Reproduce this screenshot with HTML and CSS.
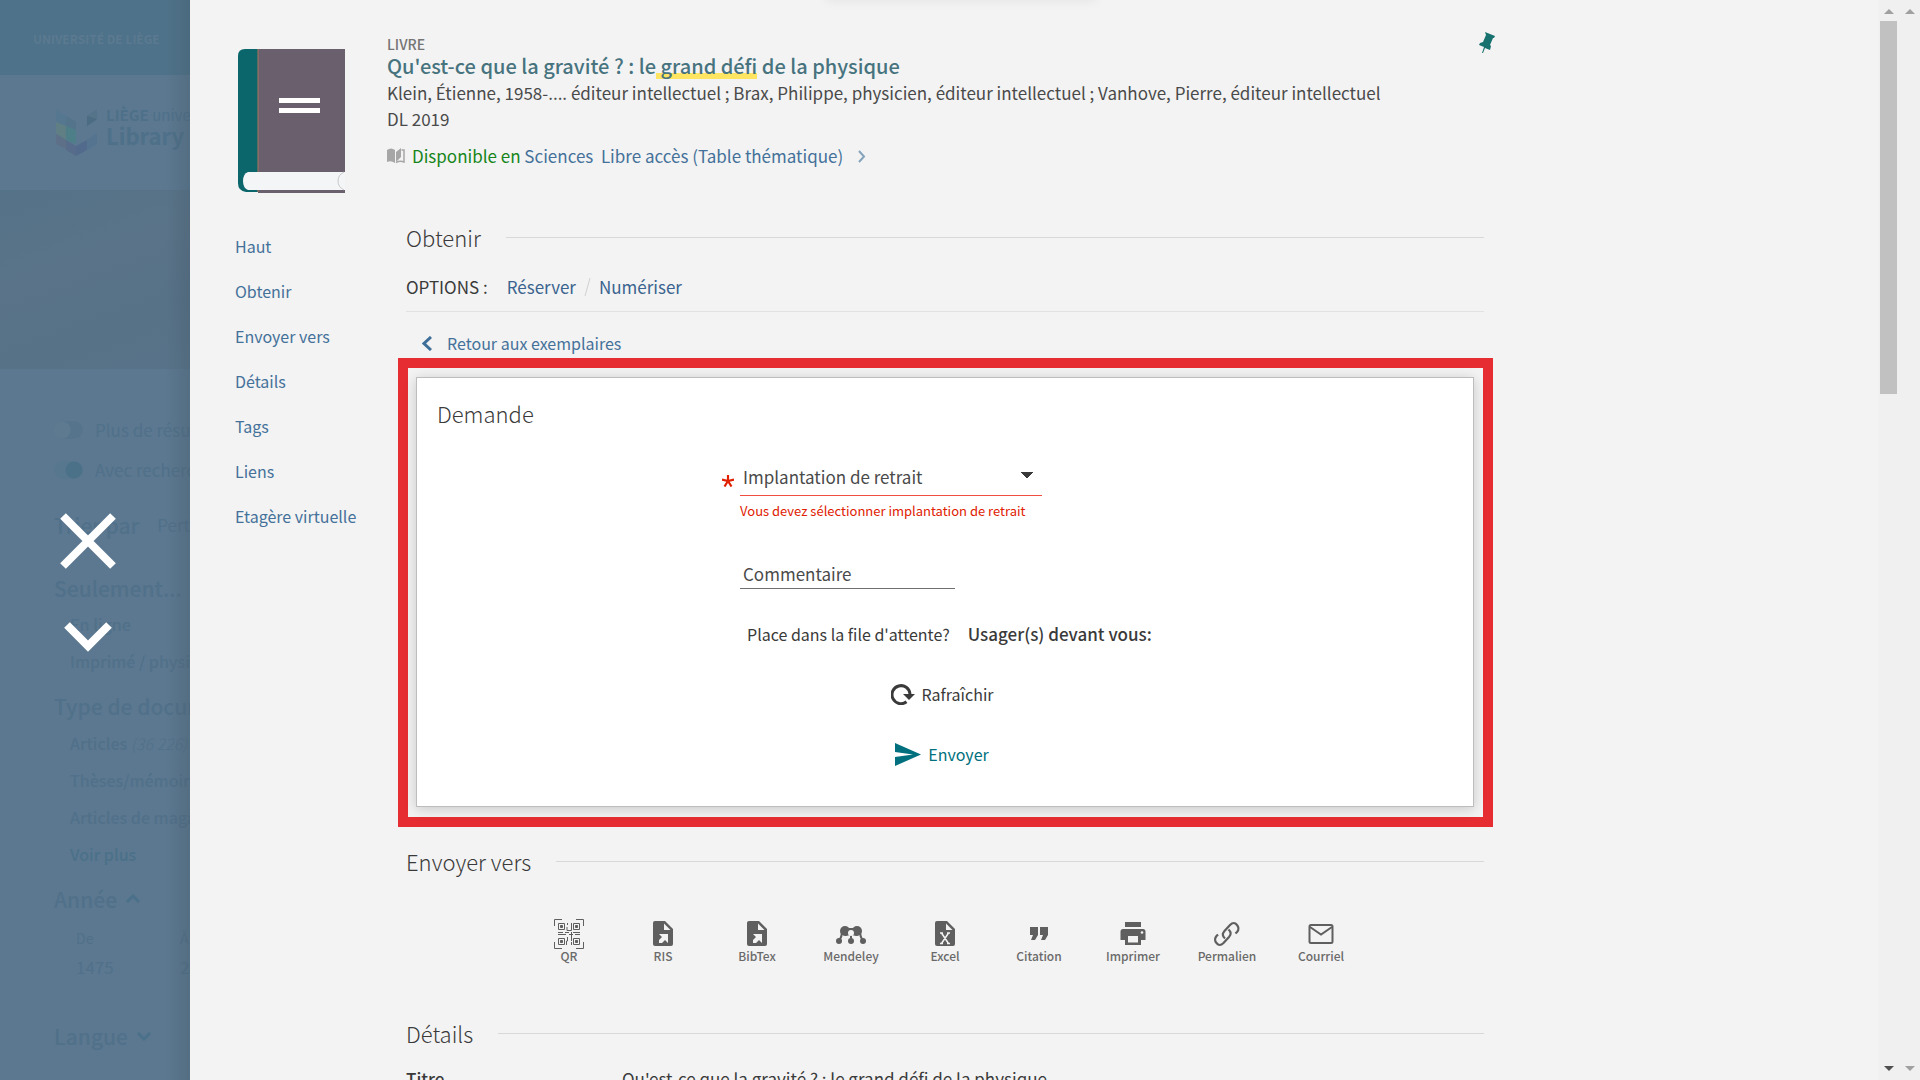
FILE: index.html
```html
<!DOCTYPE html>
<html lang="fr">
<head>
<meta charset="utf-8">
<title>Qu'est-ce que la gravité ? - ULiège Library</title>
<link rel="stylesheet" href="styles.css">
</head>
<body>
<div class="app">
  <aside class="backdrop">
    <div class="topbar">UNIVERSITÉ DE LIÈGE</div>
    <div class="brand">
      <svg class="brand-mark" viewBox="0 0 42 48" aria-hidden="true">
        <path d="M0 2l10 6v10L0 14z" fill="#567790"/><path d="M10 8l10 6v8l-10-4z" fill="#53748b"/>
        <path d="M0 14l10 4v14L0 26z" fill="#5f7f84"/><path d="M10 18l10 4v14l-10-4z" fill="#4e7f88"/>
        <path d="M0 26l10 6v9L0 36z" fill="#5d7088"/><path d="M10 32l10 6v10L10 42z" fill="#576c8b"/>
        <path d="M20 38l11-6v10l-11 6z" fill="#526b8d"/><path d="M31 32l10-7v11l-10 6z" fill="#557490"/>
        <path d="M31 8l10-7v10l-10 7z" fill="#557389"/><path d="M31 8l10 3-10 7z" fill="#4b6c82"/>
      </svg>
      <div class="brand-text"><span class="brand-top"><b>LIÈGE</b> université</span><b class="brand-name">Library</b></div>
    </div>
    <div class="banner"></div>
    <div class="filters">
      <label class="toggle"><input type="checkbox"><span>Plus de résultats</span></label>
      <label class="toggle"><input type="checkbox" checked><span>Avec recherche</span></label>
      <div class="sort"><b>Trier par</b><span>Pertinence</span></div>
      <h3 class="facet">Seulement...</h3>
      <a class="choice" href="#">En ligne</a>
      <a class="choice" href="#">Imprimé / physique</a>
      <h3 class="facet facet-tight">Type de document</h3>
      <a class="choice" href="#">Articles <i>(36 226)</i></a>
      <a class="choice" href="#">Thèses/mémoires</a>
      <a class="choice" href="#">Articles de magazine</a>
      <a class="choice more" href="#">Voir plus</a>
      <h3 class="facet facet-tight">Année <svg viewBox="0 0 16 10"><path d="M2 8l6-6 6 6"/></svg></h3>
      <div class="years">
        <label>De<input type="text" value="1475"></label>
        <label>À<input type="text" value="2024"></label>
      </div>
      <h3 class="facet facet-last">Langue <svg viewBox="0 0 16 10"><path d="M2 2l6 6 6-6"/></svg></h3>
    </div>
    <div class="overlay-controls">
      <button type="button" aria-label="Fermer"><svg width="56" height="56" viewBox="0 0 56 56"><path d="M3 3l50 50M53 3L3 53" stroke-width="8"/></svg></button>
      <button type="button" aria-label="Suivant"><svg width="48" height="30" viewBox="0 0 48 30"><path d="M3 3l21 21L45 3" stroke-width="8"/></svg></button>
    </div>
  </aside>

  <main class="panel">
    <header class="record">
      <svg class="cover" viewBox="0 0 107 144" aria-hidden="true">
        <path d="M20 0h87v144H20z" fill="#6a606d"/>
        <path d="M7 0h13v143H8q-8-1-8-9V7q0-7 7-7z" fill="#0a666b"/>
        <path d="M20 0v143" stroke="#a8745c" stroke-width="1"/>
        <path d="M41 49h41v5H41zM41 59h41v5H41z" fill="#fff"/>
        <path d="M10 123h97v18H10q-5-2-5-9t5-9z" fill="#f4f5f7"/>
        <path d="M106 123q-6 3-6 9t6 9" fill="none" stroke="#c8c9cb"/>
      </svg>
      <div class="record-text">
        <div class="kind">LIVRE</div>
        <h1 class="title"><a href="#">Qu'est-ce que la gravité ? : le<mark> grand défi</mark> de la physique</a></h1>
        <div class="meta">Klein, Étienne, 1958-.... éditeur intellectuel ; Brax, Philippe, physicien, éditeur intellectuel ; Vanhove, Pierre, éditeur intellectuel</div>
        <div class="meta">DL 2019</div>
        <div class="avail">
          <svg width="18" height="16" viewBox="0 0 18 16"><path d="M0 2q4-3 8 0v13q-4-3-8-1z" fill="#a6a6a6"/><path d="M9 4l5-4v9l-5 5z" fill="#a6a6a6"/><path d="M14.500 2H17v12q-4-1.500-8 .500" fill="none" stroke="#a6a6a6" stroke-width="1.500"/></svg>
          <a href="#"><em>Disponible en</em> Sciences&nbsp; Libre accès (Table thématique)</a>
          <svg width="9" height="13" viewBox="0 0 9 13" fill="none" stroke="#84a3bd" stroke-width="2"><path d="M2 1l5 5.500-5 5.500"/></svg>
        </div>
      </div>
      <button type="button" class="pin" aria-label="Épingler"><svg width="17" height="22" viewBox="0 0 17 22" fill="#17726f"><path d="M6 0l10 4-1 2h-1l-3 7 1 1-1 4-5-2-2 5H3l2-6-5-2 1-2 3-1 3-7z"/></svg></button>
    </header>

    <div class="body">
      <nav class="toc">
        <a href="#">Haut</a><a href="#">Obtenir</a><a href="#">Envoyer vers</a><a href="#">Détails</a><a href="#">Tags</a><a href="#">Liens</a><a href="#">Etagère virtuelle</a>
      </nav>
      <div class="sections">
        <section>
          <h2 class="head">Obtenir</h2>
          <div class="options"><span>OPTIONS :</span><a href="#">Réserver</a><svg width="7" height="18" viewBox="0 0 7 18"><path d="M6 0L1 18" stroke="#d0d0d0"/></svg><a href="#">Numériser</a></div>
          <a class="back" href="#"><svg width="10" height="15" viewBox="0 0 10 15" fill="none" stroke="#3f6f98" stroke-width="3"><path d="M9 1L2 7.500 9 14"/></svg>Retour aux exemplaires</a>
          <div class="frame">
            <div class="card">
              <h3 class="card-title">Demande</h3>
              <form class="request">
                <div class="pickup">
                  <svg class="star" width="12" height="12" viewBox="0 0 12 12" aria-hidden="true"><path d="M6 6V0M6 6L0 4.500M6 6l6-1.500M6 6l-3.500 5.500M6 6l3.500 5.500" stroke="#e02000" stroke-width="2.200"/></svg>
                  <select aria-label="Implantation de retrait"><option>Implantation de retrait</option></select>
                </div>
                <p class="error">Vous devez sélectionner implantation de retrait</p>
                <input class="comment" type="text" placeholder="Commentaire" aria-label="Commentaire">
                <div class="queue"><span>Place dans la file d'attente?</span><b>Usager(s) devant vous:</b></div>
                <button type="button" class="action"><svg width="24" height="22" viewBox="0 0 24 22"><path d="M15.500 18.800A9 9 0 1 1 19 11" fill="none" stroke="#3a3a3a" stroke-width="3"/><path d="M12 11h12l-6 6z" fill="#3a3a3a"/></svg>Rafraîchir</button>
                <button type="submit" class="action send"><svg width="26" height="23" viewBox="0 0 26 23"><path d="M0 0l26 11.500L0 23v-9l18-2.500L0 9z" fill="#00707e"/></svg>Envoyer</button>
              </form>
            </div>
          </div>
        </section>

        <section class="share">
          <h2 class="head">Envoyer vers</h2>
          <div class="targets">
            <button type="button"><svg viewBox="0 0 30 30" fill="none" stroke="#5f5f5f"><path d="M.500 7V.500H8M22 .500h7.500V7M.500 23v6.500H8M22 29.500h7.500V23"/><path d="M4.500 4.500h6v6h-6zM19.500 4.500h6v6h-6zM4.500 19.500h6v6h-6zM19.500 19.500h6v6h-6zM13 8v3.500h4.500V4M13.500 4v2M4 13.500h5M11 13.500h4M19 13.500h7M4 15.500h8M15 15.500h4M21 15.500h5M17.500 13v9M13.500 18v4h-1v4M17.500 23v3"/><path d="M6.500 6.500h2v2h-2zM21.500 6.500h2v2h-2zM6.500 21.500h2v2h-2zM21.500 21.500h2v2h-2z" fill="#5f5f5f"/></svg>QR</button>
            <button type="button"><svg viewBox="0 0 30 30"><path d="M8 2h9l8 8v15q0 2-2 2H7q-2 0-2-2V4q0-2 2-2z" fill="#5f5f5f"/><path d="M16 4.500V11h6.500zM11 15h9v9l-3-3-3 3h-3v-3l3-3z" fill="#f3f3f3"/></svg>RIS</button>
            <button type="button"><svg viewBox="0 0 30 30"><path d="M8 2h9l8 8v15q0 2-2 2H7q-2 0-2-2V4q0-2 2-2z" fill="#5f5f5f"/><path d="M16 4.500V11h6.500zM11 15h9v9l-3-3-3 3h-3v-3l3-3z" fill="#f3f3f3"/></svg>BibTex</button>
            <button type="button"><svg viewBox="0 0 30 30" fill="#5f5f5f"><circle cx="9" cy="12" r="5"/><circle cx="21" cy="12" r="5"/><circle cx="3" cy="22" r="3"/><circle cx="15" cy="22" r="3"/><circle cx="27" cy="22" r="3"/><path d="M9 9h12v8l-6-1-6 1z"/><path d="M6 13q0 5-3 9M24 13q0 5 3 9M15 15v7" stroke="#5f5f5f" stroke-width="2"/><circle cx="15" cy="14" r="3" fill="#f3f3f3"/></svg>Mendeley</button>
            <button type="button"><svg viewBox="0 0 30 30"><path d="M8 2h9l8 8v15q0 2-2 2H7q-2 0-2-2V4q0-2 2-2z" fill="#5f5f5f"/><path d="M16 4.500V11h6.500z" fill="#f3f3f3"/><path d="M11.500 14l7 10.500M18.500 14l-7 10.500M10 14h3M17 14h3M10 24.500h3M17 24.500h3" stroke="#f3f3f3" stroke-width="1.500"/></svg>Excel</button>
            <button type="button"><svg viewBox="0 0 30 30" fill="#5f5f5f"><path d="M6 8h8v8l-3 5H7l2-5H6zM16 8h8v8l-3 5h-4l2-5h-3z"/></svg>Citation</button>
            <button type="button"><svg viewBox="0 0 30 30"><path d="M7 3h16v5H7zM5 10h20q2.500 0 2.500 2.500V21H23v5H7v-5H2.500v-8.500Q2.500 10 5 10z" fill="#5f5f5f"/><path d="M10 17h10v6.500H10z" fill="#f3f3f3"/><circle cx="24" cy="13.500" r="1.300" fill="#f3f3f3"/></svg>Imprimer</button>
            <button type="button"><svg viewBox="0 0 30 30" fill="none" stroke="#5f5f5f" stroke-width="2.200"><path d="M13 19.500q-4-3.500-.500-7.500l5.500-6q4-4 7 0 3 3.500 0 7l-1.500 1.500"/><path d="M16.500 10.500q4 3.500 .500 7.500l-5.500 6q-4 4-7 0-3-3.500 0-7l1.500-1.500"/></svg>Permalien</button>
            <button type="button"><svg viewBox="0 0 30 30" fill="none" stroke="#5f5f5f" stroke-width="2"><rect x="3.500" y="6" width="23" height="18" rx="1.500"/><path d="M4 8l11 7.500L26 8"/></svg>Courriel</button>
          </div>
        </section>

        <section class="details">
          <h2 class="head">Détails</h2>
          <dl><dt>Titre</dt><dd>Qu'est-ce que la gravité ? : le grand défi de la physique</dd></dl>
        </section>
      </div>
    </div>
    <div class="tab-shadow"></div>
  </main>

  <div class="scrollbars" aria-hidden="true">
    <div class="bar"><i class="up"></i><i class="thumb"></i><i class="down dark"></i></div>
    <div class="bar"><i class="up"></i><i class="down"></i></div>
  </div>
</div>
</body>
</html>
```
FILE: styles.css
```css
* { box-sizing: border-box; }
body { margin: 0; font: 17px/26px "Noto Sans CJK SC", "Noto Sans", sans-serif; color: #3a3a3a; background: #f3f3f3; }
h1, h2, h3, p, dl, dd { margin: 0; }
a { color: #44719a; text-decoration: none; }
button { padding: 0; border: 0; background: none; font: inherit; color: inherit; cursor: pointer; }
svg { display: block; flex: none; }

.app { display: grid; grid-template-columns: 190px minmax(0, 1fr) 42px; height: 100vh; overflow: hidden; }

/* dimmed results page behind the record */
.backdrop { position: relative; overflow: hidden; white-space: nowrap; background: #5b7890; color: #517089; }
.backdrop::after { content: ""; position: absolute; inset: 0 0 0 auto; width: 24px; background: linear-gradient(to right, transparent, rgba(70, 90, 105, .35)); }
.topbar { height: 75px; padding: 26px 33px; background: #4e7289; color: #5b7990; font-size: 12px; font-weight: 700; }
.brand { display: flex; gap: 8px; height: 115px; padding: 30px 0 0 56px; color: #4e7089; }
.brand-mark { width: 42px; height: 48px; margin-top: 3px; }
.brand-text { display: flex; flex-direction: column; }
.brand-top { font-size: 15px; line-height: 19px; }
.brand-name { font-size: 22px; line-height: 22px; }
.banner { height: 179px; background: linear-gradient(160deg, #547288, #5a7388 40%, #577187 70%, #587389); }
.filters { padding: 41px 0 0 54px; }
.toggle { display: flex; align-items: center; gap: 12px; height: 40px; }
.toggle input { appearance: none; flex: none; width: 29px; height: 18px; margin: 0; border-radius: 9px; background: radial-gradient(circle at 8px 9px, #5e7a91 8px, #56748c 9px); }
.toggle input:checked { background: radial-gradient(circle at 20px 9px, #4b7189 8px, #57778f 9px); }
.sort { display: flex; gap: 18px; padding-top: 19px; line-height: 32px; }
.sort b { font-size: 21px; font-weight: 500; }
.facet { display: flex; align-items: center; gap: 8px; padding: 31px 0 2px; font-size: 21px; font-weight: 500; line-height: 32px; }
.facet-tight { padding: 10px 0 3px; }
.facet svg { width: 16px; height: 10px; fill: none; stroke: #4b7089; stroke-width: 3; }
.choice { display: block; padding-left: 16px; color: #517089; font-size: 16px; font-weight: 500; line-height: 37px; }
.choice i { font-weight: 300; }
.more { color: #4b7189; }
.years { display: flex; gap: 24px; padding: 8px 0 0 22px; font-size: 14px; line-height: 24px; }
.years label { display: block; width: 80px; }
.years input { display: block; width: 80px; height: 32px; padding: 0; border: 0; background: none; font: inherit; font-size: 17px; color: inherit; }
.facet-last { padding-top: 38px; }
.overlay-controls { position: absolute; z-index: 1; top: 513px; left: 60px; display: flex; flex-direction: column; align-items: center; gap: 53px; fill: none; stroke: #fff; }

/* record panel */
.panel { position: relative; overflow: hidden; }
.tab-shadow { position: absolute; top: -10px; left: 636px; width: 270px; height: 10px; box-shadow: 0 0 12px rgba(0, 0, 0, .08); }
.record { display: flex; max-width: 1351px; height: 221px; padding: 36px 45px 0 48px; }
.cover { width: 107px; height: 144px; margin: 13px 42px 0 0; }
.record-text { flex: 1; min-width: 0; white-space: nowrap; }
.kind { font-size: 14px; font-weight: 500; line-height: 16px; color: #757575; }
.title { font-size: 20px; font-weight: 500; line-height: 28px; }
.title a { color: #47737f; }
.title mark { color: inherit; background: linear-gradient(#ffe562, #ffe562) 0 22px / 100% 6px no-repeat; }
.meta { height: 26px; color: #4a4a4a; }
.avail { display: flex; align-items: center; gap: 7px; margin-top: 11px; }
.avail em { font-style: normal; color: #16851a; }
.avail a + svg { margin-left: 7px; }
.pin { align-self: flex-start; margin: -4px 0 0; }
.body { display: flex; max-width: 1294px; padding-left: 45px; }
.toc { display: flex; flex-direction: column; width: 171px; padding-top: 3px; font-size: 16px; line-height: 45px; }
.sections { flex: 1; min-width: 0; }
.head { display: flex; align-items: center; gap: 25px; font-size: 22px; font-weight: 300; line-height: 33px; }
.head::after { content: ""; flex: 1; height: 1px; background: #d8d8d8; }
.options { display: flex; align-items: center; gap: 8px; margin-top: 20px; padding-bottom: 11px; border-bottom: 1px solid #e2e2e2; }
.options span { margin-right: 11px; }
.options a { color: #3a648f; }
.back { display: flex; align-items: center; gap: 15px; margin-top: 19px; padding-left: 16px; font-size: 16px; line-height: 24px; }
.frame { margin: 3px -9px 0 -8px; padding: 9px 9px 10px 8px; border: 10px solid #e62d31; }
.card { padding: 19px 20px 39px; border: 1px solid #bdbdbd; background: #fff; box-shadow: 0 2px 12px rgba(0, 0, 0, .18); }
.card-title { font-size: 22px; font-weight: 300; line-height: 32px; }
.request { display: flex; flex-direction: column; align-items: flex-start; width: 410px; margin: 28px auto 0; }
.pickup { position: relative; width: 302px; }
.star { position: absolute; right: 100%; top: 18px; margin-right: 6px; }
.pickup select { appearance: none; width: 100%; height: 39px; padding: 2px 3px 0; border: 0; border-bottom: 1px solid #f04e40; border-radius: 0; font: inherit; color: #4a4a4a; background: conic-gradient(from -45deg at 50% 100%, #3a3a3a 90deg, transparent 0) 281px 15px / 12px 6px no-repeat; }
.error { margin-top: 5px; font-size: 13px; line-height: 20px; color: #e02000; }
.comment { width: 215px; height: 30px; margin-top: 38px; padding: 0 3px; border: 0; border-bottom: 1px solid #707070; font: inherit; background: none; }
.comment::placeholder { color: #4a4a4a; opacity: 1; }
.queue { display: flex; gap: 18px; margin-top: 32px; padding-left: 7px; font-size: 16px; white-space: nowrap; }
.queue b { font-weight: 500; font-size: 17px; }
.action { display: flex; align-items: center; align-self: center; gap: 7px; margin-top: 34px; padding-right: 6px; font-size: 16px; line-height: 26px; }
.send { color: #00707e; }
.share { margin-top: 18px; }
.targets { display: flex; justify-content: center; margin-top: 41px; }
.targets button { display: flex; flex-direction: column; align-items: center; width: 94px; font-size: 12px; font-weight: 500; line-height: 14px; color: #6a6a6a; }
.targets svg { width: 30px; height: 30px; }
.details { margin-top: 54px; }
.details dl { display: grid; grid-template-columns: 216px 1fr; margin-top: 16px; }
.details dt { font-weight: 500; }

.scrollbars { display: flex; gap: 4px; padding-left: 2px; background: #f0f0f0; }
.bar { display: flex; flex-direction: column; align-items: center; width: 17px; padding: 9px 0; }
.up { border: 5px solid transparent; border-top: 0; border-bottom-color: #a0a0a0; }
.thumb { width: 17px; height: 373px; margin-top: 7px; background: #c1c1c1; }
.down { margin-top: auto; border: 5px solid transparent; border-bottom: 0; border-top-color: #a0a0a0; }
.dark { border-top-color: #505050; }
```
